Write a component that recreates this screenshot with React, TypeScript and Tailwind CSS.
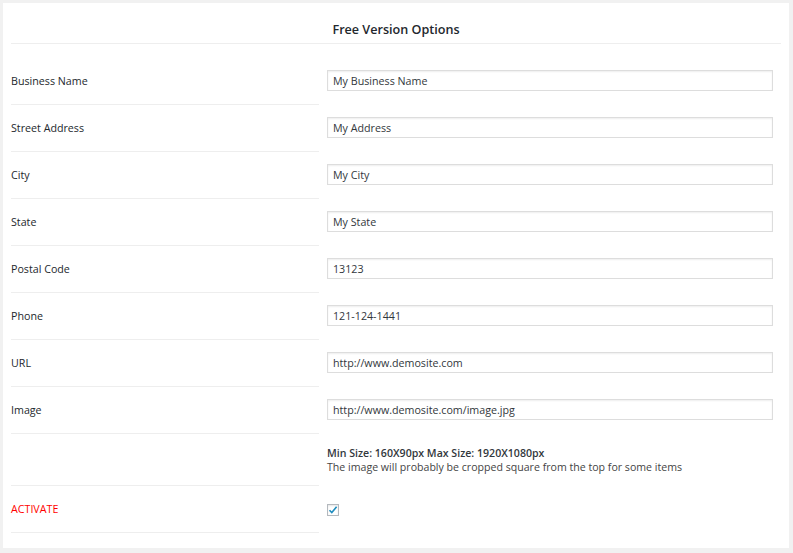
const fields = [
    { label: "Business Name", value: "My Business Name" },
    { label: "Street Address", value: "My Address" },
    { label: "City", value: "My City" },
    { label: "State", value: "My State" },
    { label: "Postal Code", value: "13123" },
    { label: "Phone", value: "121-124-1441" },
    { label: "URL", value: "http://www.demosite.com" },
    { label: "Image", value: "http://www.demosite.com/image.jpg" },
]

const App = () => {
    return (
        <div className="h-[553px] w-[793px] bg-[#f1f1f1] p-[3px] font-['Open_Sans',sans-serif] text-[#23282d]">
            <div className="h-[545px] w-[786px] bg-white px-[8px]">
                <div className="pt-[17px] pb-[3px] border-b border-[#eeeeee] text-center text-[12.6px] leading-[20px] font-semibold">
                    Free Version Options
                </div>
                <div className="mt-[14px]">
                    {fields.map((f) => (
                        <div key={f.label} className="flex">
                            <div className="w-[308px] h-[47px] border-b border-[#eeeeee] flex items-center text-[10.7px]">
                                {f.label}
                            </div>
                            <div className="flex-1 flex items-center pl-[8px] pr-[8px] pb-[2px]">
                                <input
                                    readOnly
                                    value={f.value}
                                    className="w-full h-[21px] border border-[#dddddd] shadow-[inset_0_1px_2px_rgba(0,0,0,0.07)] px-[5px] text-[10.7px] text-[#32373c] outline-none"
                                />
                            </div>
                        </div>
                    ))}
                    <div className="flex">
                        <div className="w-[308px] h-[52px] border-b border-[#eeeeee]"></div>
                        <div className="flex-1 flex flex-col justify-center pl-[8px] text-[10.6px] leading-[14px] text-[#444]">
                            <span className="font-semibold text-[#32373c]">Min Size: 160X90px Max Size: 1920X1080px</span>
                            <span>The image will probably be cropped square from the top for some items</span>
                        </div>
                    </div>
                    <div className="flex">
                        <div className="w-[308px] h-[47px] border-b border-[#eeeeee] flex items-center text-[10.7px] text-[#ff0000]">
                            ACTIVATE
                        </div>
                        <div className="flex-1 flex items-center pl-[8px]">
                            <span className="w-[12px] h-[12px] border border-[#b4b9be] bg-white flex items-center justify-center shadow-[inset_0_1px_2px_rgba(0,0,0,0.1)]">
                                <svg width="10" height="10" viewBox="0 0 10 10">
                                    <path d="M1.5 5.2 L3.8 7.6 L8.6 1.8" fill="none" stroke="#1e8cbe" strokeWidth="1.6" />
                                </svg>
                            </span>
                        </div>
                    </div>
                </div>
            </div>
        </div>
    )
}

export default App
